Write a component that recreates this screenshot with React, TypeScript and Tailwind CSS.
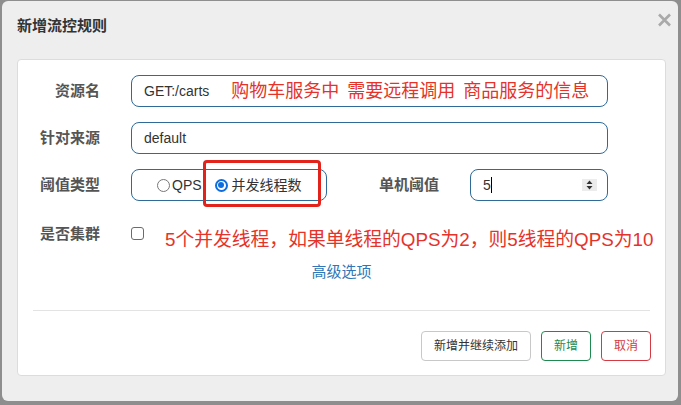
import React from "react";

function Label({ children, w = "w-[82px]" }: { children: React.ReactNode; w?: string }) {
  return (
    <div className={`${w} shrink-0 text-right text-[15px] font-bold text-[#555] leading-[32px]`}>
      {children}
    </div>
  );
}

function Radio({ checked }: { checked?: boolean }) {
  if (checked) {
    return (
      <span className="w-[13px] h-[13px] rounded-full border-[2px] border-[#0d6ee0] bg-white flex items-center justify-center">
        <span className="w-[6px] h-[6px] rounded-full bg-[#0d6ee0]" />
      </span>
    );
  }
  return <span className="w-[13px] h-[13px] rounded-full border border-[#777] bg-white" />;
}

export default function App() {
  return (
    <div className="w-[681px] h-[405px] bg-[#8e8e8e] pl-[2px] pt-[1px] overflow-hidden font-['Liberation_Sans','Noto_Sans_CJK_SC',sans-serif]">
      <div className="w-[676px] h-[400px] bg-[#eeeeee] rounded-[6px] flex flex-col">
        {/* header */}
        <div className="h-[58px] flex justify-between pl-[15px] pr-[6px]">
          <div className="mt-[15px] text-[15px] leading-[20px] font-bold text-[#333]">新增流控规则</div>
          <svg className="mt-[12px]" width="15" height="14" viewBox="0 0 15 14">
            <path d="M2 1.5 L13 12.5 M13 1.5 L2 12.5" stroke="#a9a9a9" strokeWidth="2.6" />
          </svg>
        </div>

        {/* body */}
        <div className="ml-[15px] w-[649px] h-[317px] bg-white border border-[#dcdcdc] rounded-[4px] pt-[15px] flex flex-col">
          <div className="flex">
            <Label>资源名</Label>
            <div className="ml-[31px] w-[477px] h-[32px] border border-[#2f6a99] rounded-[8px] flex items-center pl-[12px] whitespace-nowrap">
              <span className="text-[14px] text-[#333]">GET:/carts</span>
              <span className="ml-[22px] flex gap-[8px] text-[18px] text-[#e5332a] leading-[24px]">
                <span>购物车服务中</span>
                <span>需要远程调用</span>
                <span>商品服务的信息</span>
              </span>
            </div>
          </div>

          <div className="flex mt-[15px]">
            <Label>针对来源</Label>
            <div className="ml-[31px] w-[477px] h-[32px] border border-[#2f6a99] rounded-[8px] flex items-center pl-[12px]">
              <span className="text-[14px] text-[#333]">default</span>
            </div>
          </div>

          <div className="flex mt-[15px]">
            <Label>阈值类型</Label>
            <div className="relative ml-[31px] w-[196px] h-[32px] border border-[#2f6a99] rounded-[8px] flex items-center pl-[25px]">
              <Radio />
              <span className="ml-[2px] text-[14px] text-[#333]">QPS</span>
              <span className="ml-[13px]">
                <Radio checked />
              </span>
              <span className="ml-[4px] text-[14px] text-[#333]">并发线程数</span>
              <div className="absolute left-[71px] top-[-10px] w-[118px] h-[47px] border-[3px] border-[#e2231c] rounded-[4px]" />
            </div>
            <Label w="w-[112px]">单机阈值</Label>
            <div className="ml-[31px] w-[138px] h-[32px] border border-[#2f6a99] rounded-[8px] flex items-center pl-[12px] pr-[10px]">
              <span className="text-[14px] text-[#333]">5</span>
              <span className="w-px h-[16px] bg-black" />
              <div className="ml-auto w-[15px] h-[12px] bg-[#ececec] flex items-center justify-center">
                <svg width="7" height="10" viewBox="0 0 7 10">
                  <path d="M3.5 0.5 L6.5 4 L0.5 4 Z M3.5 9.5 L6.5 6 L0.5 6 Z" fill="#333" />
                </svg>
              </div>
            </div>
          </div>

          <div className="flex items-start mt-[21px] h-[30px]">
            <div className="w-[82px] shrink-0 text-right text-[15px] font-bold text-[#555] leading-[24px]">是否集群</div>
            <span className="ml-[31px] mt-[5px] w-[13px] h-[13px] rounded-[3px] border border-[#6b6b6b] bg-white" />
            <span className="ml-[21px] mt-[6px] text-[18.8px] leading-[24px] text-[#e5332a] whitespace-nowrap">
              5个并发线程，如果单线程的QPS为2，则5线程的QPS为10
            </span>
          </div>

          <div className="mt-[8px] text-center text-[15px] leading-[24px] text-[#2e77b8]">高级选项</div>

          <div className="mt-[26px] mx-[15px] border-t border-[#e3e3e3]" />

          <div className="mt-[20px] flex justify-end gap-[10px] pr-[14px]">
            <button className="w-[110px] h-[30px] border border-[#c8c8c8] rounded-[4px] text-[12px] text-[#333] bg-white">
              新增并继续添加
            </button>
            <button className="w-[50px] h-[30px] border border-[#1e8a4f] rounded-[4px] text-[12px] text-[#1e8a4f] bg-white">
              新增
            </button>
            <button className="w-[50px] h-[30px] border border-[#d43a44] rounded-[4px] text-[12px] text-[#d43a44] bg-white">
              取消
            </button>
          </div>
        </div>
      </div>
    </div>
  );
}
